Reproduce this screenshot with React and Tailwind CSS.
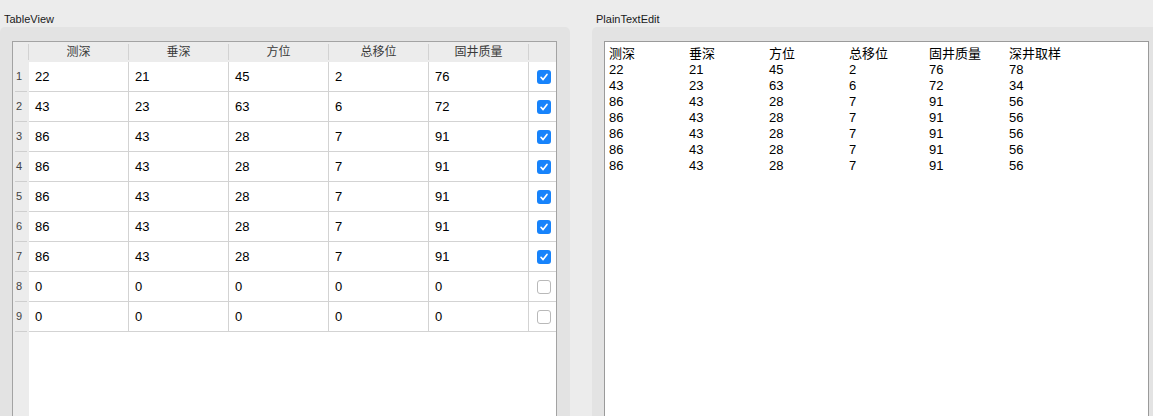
import React from 'react';

const headers = ['测深', '垂深', '方位', '总移位', '固井质量'];
const rows = [
  [22, 21, 45, 2, 76, true],
  [43, 23, 63, 6, 72, true],
  [86, 43, 28, 7, 91, true],
  [86, 43, 28, 7, 91, true],
  [86, 43, 28, 7, 91, true],
  [86, 43, 28, 7, 91, true],
  [86, 43, 28, 7, 91, true],
  [0, 0, 0, 0, 0, false],
  [0, 0, 0, 0, 0, false],
];
const textLines = [
  ['测深', '垂深', '方位', '总移位', '固井质量', '深井取样'],
  ['22', '21', '45', '2', '76', '78'],
  ['43', '23', '63', '6', '72', '34'],
  ['86', '43', '28', '7', '91', '56'],
  ['86', '43', '28', '7', '91', '56'],
  ['86', '43', '28', '7', '91', '56'],
  ['86', '43', '28', '7', '91', '56'],
  ['86', '43', '28', '7', '91', '56'],
];

function CheckBox({ checked }) {
  if (!checked) {
    return <div className="w-[14px] h-[14px] rounded-[3px] border border-[#b9b9b9] bg-white" />;
  }
  return (
    <div className="w-[14px] h-[14px] rounded-[3px] bg-[#1783fb] flex items-center justify-center">
      <svg width="10" height="10" viewBox="0 0 10 10" fill="none">
        <path d="M2 5.3 L4.1 7.6 L8 2.4" stroke="white" strokeWidth="1.6" strokeLinecap="round" strokeLinejoin="round" />
      </svg>
    </div>
  );
}

function TableView() {
  return (
    <div className="w-[545px] h-[400px] border border-[#a3a3a3] bg-white flex flex-col">
      <div className="flex shrink-0 h-[20px] bg-[#ececec] text-[12px] text-[#3a3a3a]">
        <div className="w-[16px] flex items-center justify-end">
          <div className="w-px h-[16px] bg-[#d2d2d2]" />
        </div>
        {headers.map((h) => (
          <div key={h} className="w-[100px] flex items-center">
            <div className="flex-1 text-center">{h}</div>
            <div className="w-px h-[16px] bg-[#d2d2d2]" />
          </div>
        ))}
        <div className="flex-1" />
      </div>
      {rows.map((r, i) => (
        <div key={i} className="flex shrink-0 h-[30px]">
          <div className="w-[16px] bg-[#ececec] flex flex-col">
            <div className="flex-1 flex items-center pl-[3px] text-[11px] text-[#444]">{i + 1}</div>
            <div className="ml-[2px] mr-[2px] h-px bg-[#cfcfcf]" />
          </div>
          {r.slice(0, 5).map((v, j) => (
            <div key={j} className="w-[100px] border-r border-b border-[#d3d3d3] flex items-center pl-[6px] text-[13px] text-black">
              {v}
            </div>
          ))}
          <div className="flex-1 border-b border-[#d3d3d3] flex items-center pl-[8px]">
            <CheckBox checked={r[5]} />
          </div>
        </div>
      ))}
      <div className="flex flex-1">
        <div className="w-[16px] bg-[#ececec]" />
        <div className="flex-1 bg-white" />
      </div>
    </div>
  );
}

function PlainTextEdit() {
  return (
    <div className="w-[545px] h-[400px] border border-[#9a9a9a] bg-white pl-[4px] pt-[4px] text-[13px] leading-[16px] text-black">
      {textLines.map((line, i) => (
        <div key={i} className="flex">
          {line.map((t, j) => (
            <div key={j} className="w-[80px]">{t}</div>
          ))}
        </div>
      ))}
    </div>
  );
}

export default function App() {
  return (
    <div
      className="w-[1153px] h-[416px] bg-[#ececec] flex overflow-hidden"
      style={{ fontFamily: '"Liberation Sans", "Noto Sans CJK SC", sans-serif' }}
    >
      <div className="w-[570px] flex flex-col">
        <div className="shrink-0 h-[27px] pl-[4px] pt-[12px] text-[11px] leading-[14px] text-[#1a1a1a]">TableView</div>
        <div className="flex-1 bg-[#e3e3e3] rounded-t-[5px] pl-[12px] pt-[14px]">
          <TableView />
        </div>
      </div>
      <div className="flex-1 ml-[22px] flex flex-col">
        <div className="shrink-0 h-[27px] pl-[4px] pt-[12px] text-[11px] leading-[14px] text-[#1a1a1a]">PlainTextEdit</div>
        <div className="flex-1 bg-[#e3e3e3] rounded-tl-[5px] pl-[12px] pt-[14px]">
          <PlainTextEdit />
        </div>
      </div>
    </div>
  );
}
